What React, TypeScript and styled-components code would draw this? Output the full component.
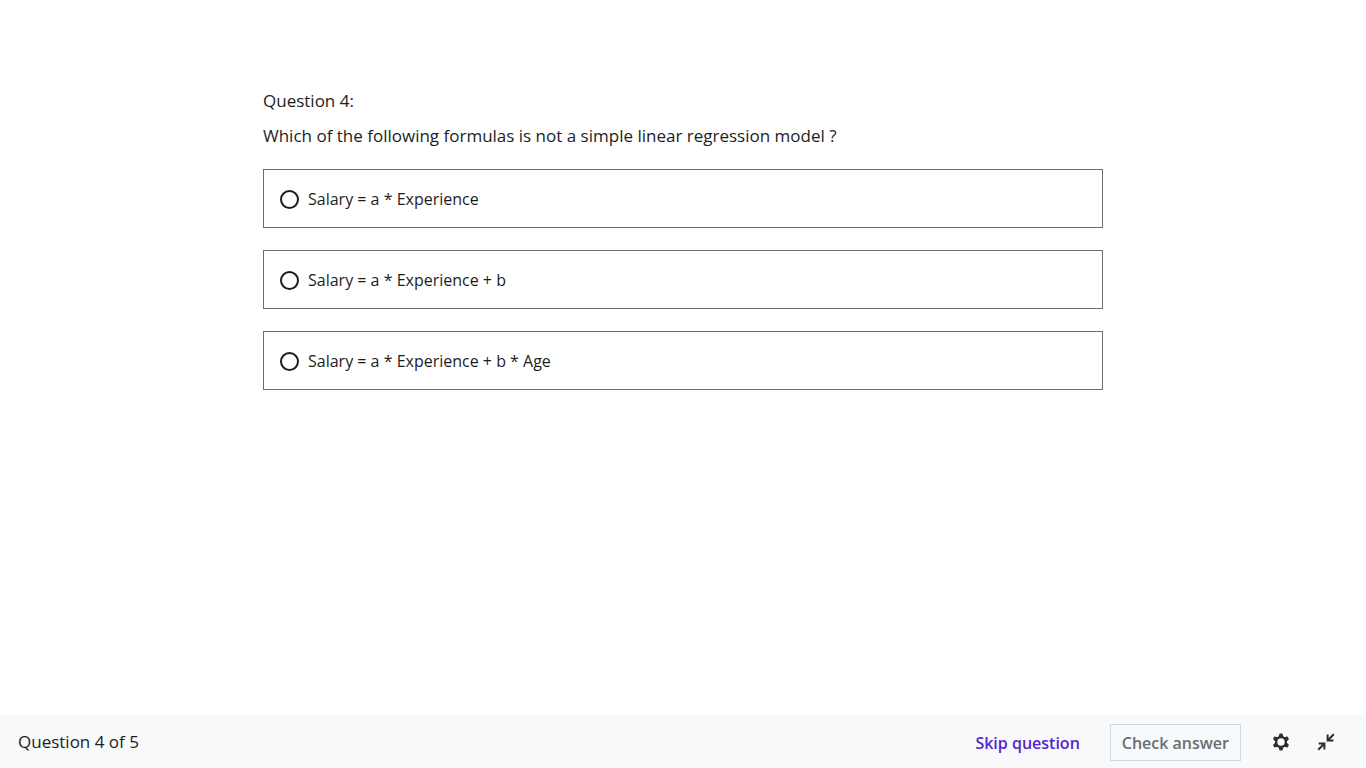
import React, { useState } from "react";
import styled, { createGlobalStyle } from "styled-components";

const GlobalStyle = createGlobalStyle`
  *, *::before, *::after { box-sizing: border-box; }
  body {
    margin: 0;
    background: #ffffff;
    color: #1c1d1f;
    font-family: "Segoe UI", "Open Sans", "Noto Sans", sans-serif;
  }
`;

const Page = styled.div`
  display: flex;
  flex-direction: column;
  min-height: 100vh;
`;

const Quiz = styled.main`
  flex: 1;
  width: 100%;
  max-width: 888px;
  margin: 0 auto;
  padding: 88px 24px 24px;
`;

const QuestionLabel = styled.div`
  font-size: 17px;
  line-height: 26px;
`;

const Prompt = styled.legend`
  padding: 9px 0 20px;
  font-size: 17px;
  line-height: 26px;
`;

const Answers = styled.fieldset`
  min-width: 0;
  margin: 0;
  padding: 0;
  border: 0;
`;

const AnswerList = styled.div`
  display: flex;
  flex-direction: column;
  gap: 22px;
`;

const Answer = styled.label`
  display: flex;
  align-items: center;
  gap: 9px;
  min-height: 59px;
  padding: 1px 16px 0;
  border: 1px solid #6a6f73;
  font-size: 16px;
  line-height: 24px;
  cursor: pointer;
`;

const Radio = styled.input`
  appearance: none;
  flex: none;
  width: 19px;
  height: 19px;
  margin: 0;
  border: 2px solid #1c1d1f;
  border-radius: 50%;
  background: #ffffff;

  &:checked {
    border-width: 6px;
  }
`;

const Footer = styled.footer`
  display: flex;
  align-items: center;
  justify-content: space-between;
  min-height: 53px;
  padding: 1px 24px 0 18px;
  background: #f7f9fa;
`;

const Progress = styled.span`
  font-size: 17px;
  line-height: 24px;
`;

const Actions = styled.div`
  display: flex;
  align-items: center;
`;

const TextButton = styled.button<{ $outlined?: boolean }>`
  height: 37px;
  margin: 0;
  padding: 2px 11px 0;
  border: 1px solid ${(p) => (p.$outlined ? "#d1d7dc" : "transparent")};
  background: transparent;
  color: ${(p) => (p.$outlined ? "#6a6f73" : "#5624d0")};
  font-family: inherit;
  font-size: 16px;
  font-weight: 600;
  line-height: 24px;
  white-space: nowrap;
  cursor: pointer;
`;

const ButtonPair = styled.div`
  display: flex;
  gap: 18px;
  margin-right: 24px;
`;

const IconButtons = styled.div`
  display: flex;
  gap: 13px;
`;

const IconButton = styled.button`
  display: flex;
  align-items: center;
  justify-content: center;
  width: 32px;
  height: 32px;
  padding: 0;
  border: 0;
  background: transparent;
  color: #2d2f31;
  cursor: pointer;
`;

const options = [
  "Salary = a * Experience",
  "Salary = a * Experience + b",
  "Salary = a * Experience + b * Age",
];

function GearIcon() {
  return (
    <svg width="18" height="18" viewBox="0 0 18 18" aria-hidden="true">
      <g fill="currentColor">
        {[0, 60, 120].map((angle) => (
          <path key={angle} transform={`rotate(${angle} 9 9)`} d="M7.6 0.6h2.8l1.2 3.6H6.4zM7.6 17.4h2.8l1.2-3.6H6.4z" />
        ))}
      </g>
      <circle cx="9" cy="9" r="4.9" fill="none" stroke="currentColor" strokeWidth="2.4" />
    </svg>
  );
}

function ContractIcon() {
  return (
    <svg width="18" height="18" viewBox="0 0 18 18" fill="none" stroke="currentColor" strokeWidth="2" aria-hidden="true">
      <path d="M16.8 1.2L11.3 6.7M10.6 1.6v5.8h5.8" />
      <path d="M1.2 16.8l5.5-5.5M1.6 10.6h5.8v5.8" />
    </svg>
  );
}

export default function App() {
  const [selected, setSelected] = useState<string | null>(null);

  return (
    <>
      <GlobalStyle />
      <Page>
        <Quiz>
          <QuestionLabel>Question 4:</QuestionLabel>
          <Answers>
            <Prompt>Which of the following formulas is not a simple linear regression model ?</Prompt>
            <AnswerList>
              {options.map((option) => (
                <Answer key={option}>
                  <Radio
                    type="radio"
                    name="answer"
                    checked={selected === option}
                    onChange={() => setSelected(option)}
                  />
                  {option}
                </Answer>
              ))}
            </AnswerList>
          </Answers>
        </Quiz>
        <Footer>
          <Progress>Question 4 of 5</Progress>
          <Actions>
            <ButtonPair>
              <TextButton type="button">Skip question</TextButton>
              <TextButton type="button" $outlined>Check answer</TextButton>
            </ButtonPair>
            <IconButtons>
              <IconButton type="button" aria-label="Settings"><GearIcon /></IconButton>
              <IconButton type="button" aria-label="Exit full screen"><ContractIcon /></IconButton>
            </IconButtons>
          </Actions>
        </Footer>
      </Page>
    </>
  );
}
